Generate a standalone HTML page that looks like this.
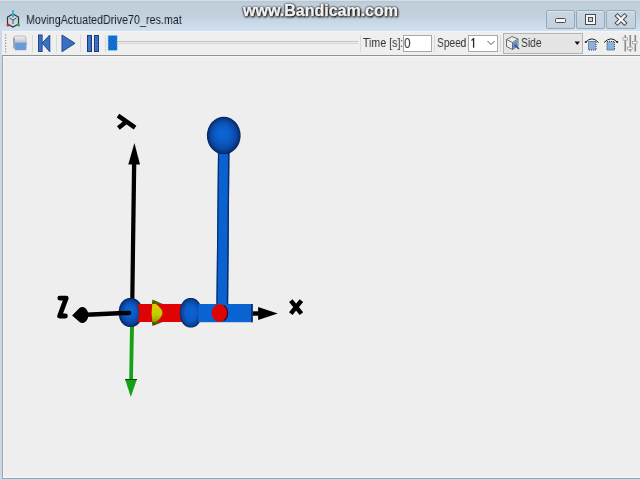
<!DOCTYPE html>
<html><head><meta charset="utf-8">
<style>
*{margin:0;padding:0;box-sizing:border-box}
html,body{width:640px;height:480px;overflow:hidden;background:#c9d9ea;font-family:"Liberation Sans",sans-serif}
.abs{position:absolute}
#title{left:0;top:0;width:640px;height:31px;background:linear-gradient(#bac8d3 0px,#bac8d3 2px,#bfcedb 3px,#c2d1de 52%,#cad9e8 75%,#d2e0f0 100%);}
#titletop{left:0;top:0;width:640px;height:1px;background:#d3dfe9}
#ttext{left:26px;top:12px;font-size:13px;color:#1e1e28;will-change:transform;white-space:nowrap;transform-origin:0 0;transform:scaleX(0.826)}
#wm{left:243px;top:2px;font-size:16px;font-weight:bold;color:#f2f2f2;white-space:nowrap;-webkit-text-stroke:0.4px #f2f2f2;text-shadow:0 0 1px #000,0 0 1px #000,0 0 2px #111,1px 1px 2px #111,0 1px 3px #333;transform:translateZ(0)}
.wbtn{top:10px;width:29px;height:19px;border:1px solid #97a8b9;background:linear-gradient(#c8d6e3,#c3d1de);border-radius:2px;box-shadow:inset 0 1px 0 #d8e4ee}
#toolbar{left:2px;top:31px;width:638px;height:24px;background:#efefef;border-top:1px solid #eef6f8}
#view{left:2px;top:55px;width:638px;height:424px;background:#eeeeee;border-left:1px solid #a4a4a4;border-top:1px solid #8f9597;border-bottom:1px solid #98a2ac;box-shadow:inset 0 1px 0 #f8f8f8}
.sep{top:35px;width:1px;height:17px;background:#d9d9d9}
.tbtxt{font-size:13px;color:#333;white-space:nowrap;transform-origin:0 0;will-change:transform}
</style></head>
<body>
<div id="title" class="abs"></div>
<div id="titletop" class="abs"></div>
<!-- app icon -->
<svg class="abs" style="left:5px;top:8px" width="16" height="22" viewBox="0 0 16 22">
  <polygon points="8,6 13.5,9 13.5,16 8,19 2.5,16 2.5,9" fill="none" stroke="#333" stroke-width="1.2"/>
  <path d="M8,12 L8,16 M8,12 L4.5,10 M8,12 L11.5,10" stroke="#555" stroke-width="1"/>
  <rect x="7" y="2.2" width="2" height="7" fill="#2ab4d8" opacity="0.9"/>
  <circle cx="3" cy="17" r="1.5" fill="#e02020"/>
  <circle cx="13.5" cy="17" r="1.5" fill="#30b030"/>
</svg>
<div id="ttext" class="abs">MovingActuatedDrive70_res.mat</div>
<div id="wm" class="abs">www.Bandicam.com</div>
<div class="abs wbtn" style="left:546px"></div>
<div class="abs wbtn" style="left:576px"></div>
<div class="abs wbtn" style="left:606px;width:30px"></div>
<svg class="abs" style="left:546px;top:10px" width="92" height="20" viewBox="0 0 92 20">
  <rect x="9.5" y="8.5" width="10" height="4" rx="1" fill="#f6f6f6" stroke="#4a4a4a" stroke-width="1"/>
  <rect x="39.5" y="4.5" width="10" height="10" fill="none" stroke="#4a4a4a" stroke-width="1"/>
  <rect x="41" y="6" width="7" height="7" fill="none" stroke="#f6f6f6" stroke-width="2"/>
  <rect x="42.5" y="7.5" width="4" height="4" fill="#c3d2e0" stroke="#4a4a4a" stroke-width="1"/>
  <path d="M71.5,6 L78.5,13 M78.5,6 L71.5,13" stroke="#4a4a4a" stroke-width="4.4" stroke-linecap="square"/>
  <path d="M71.5,6 L78.5,13 M78.5,6 L71.5,13" stroke="#f4f4f4" stroke-width="2.4" stroke-linecap="square"/>
</svg>

<div id="toolbar" class="abs"></div>
<!-- grip -->
<svg class="abs" style="left:4px;top:33px" width="3" height="21" viewBox="0 0 3 21"><g fill="#8c8c8c"><rect x="1" y="1.4" width="1.2" height="1.2"/><rect x="1" y="4.2" width="1.2" height="1.2"/><rect x="1" y="7.0" width="1.2" height="1.2"/><rect x="1" y="9.8" width="1.2" height="1.2"/><rect x="1" y="12.6" width="1.2" height="1.2"/><rect x="1" y="15.4" width="1.2" height="1.2"/><rect x="1" y="18.2" width="1.2" height="1.2"/></g></svg>
<!-- folder -->
<svg class="abs" style="left:12px;top:35px" width="17" height="17" viewBox="0 0 17 17">
  <defs><linearGradient id="fg" x1="0" y1="0" x2="0" y2="1"><stop offset="0" stop-color="#f0f0f0"/><stop offset="1" stop-color="#c4c4c4"/></linearGradient></defs>
  <path d="M1.5,3 Q1.5,1 3.5,1 L12,1 Q14,1 14,3 L14,7.5 L1.5,7.5 Z" fill="url(#fg)" stroke="#b0b0b0" stroke-width="0.8"/>
  <rect x="1.2" y="3" width="1.6" height="10.5" fill="#9a9a9a"/>
  <polygon points="2.5,7 14.8,7 14.2,15.3 3,15.3" fill="#6c9ad6"/>
  <path d="M2.5,7.4 L14.8,7.4" stroke="#a6c4ea" stroke-width="0.8"/>
</svg>
<div class="abs sep" style="left:32px"></div>
<!-- skip back -->
<svg class="abs" style="left:37px;top:34px" width="15" height="19" viewBox="0 0 15 19">
  <rect x="1.5" y="1" width="3.6" height="16.5" fill="#3a70c4" stroke="#1d4a8e" stroke-width="1"/>
  <polygon points="5.1,9 12.8,1 12.8,17.8" fill="#3a70c4" stroke="#1d4a8e" stroke-width="1"/>
</svg>
<div class="abs sep" style="left:56px"></div>
<!-- play -->
<svg class="abs" style="left:61px;top:34px" width="16" height="19" viewBox="0 0 16 19">
  <polygon points="1,1 14,9.3 1,17.7" fill="#3a70c4" stroke="#1d4a8e" stroke-width="1"/>
</svg>
<div class="abs sep" style="left:80px"></div>
<!-- pause -->
<div class="abs" style="left:87px;top:35px;width:5px;height:17px;background:#3a76d0;border:1px solid #1a3a78"></div>
<div class="abs" style="left:94px;top:35px;width:5px;height:17px;background:#3a76d0;border:1px solid #1a3a78"></div>
<div class="abs" style="left:89.5px;top:37px;width:1px;height:13px;background:repeating-linear-gradient(#1a3a78 0 1px,transparent 1px 3px);opacity:0.55"></div>
<div class="abs" style="left:96px;top:37px;width:1px;height:13px;background:repeating-linear-gradient(#1a3a78 0 1px,transparent 1px 3px);opacity:0.55"></div>
<div class="abs sep" style="left:105px"></div>
<!-- slider -->
<div class="abs" style="left:117px;top:41px;width:241px;height:3px;background:#ebebeb;border-top:1px solid #c4c4c4;border-bottom:1px solid #d6d6d6"></div>
<svg class="abs" style="left:107px;top:35px" width="11" height="16" viewBox="0 0 11 16">
  <defs><pattern id="dots" width="2" height="2" patternUnits="userSpaceOnUse" patternTransform="rotate(30)"><rect width="2" height="2" fill="#0a5ed0"/><rect x="0" y="0" width="0.8" height="0.8" fill="#3cb4c8"/></pattern></defs>
  <rect x="1" y="0.3" width="9.2" height="15.2" fill="url(#dots)"/>
  <rect x="1" y="0.3" width="9.2" height="15.2" fill="none" stroke="#9ad8f0" stroke-width="0.6"/>
</svg>
<div class="abs sep" style="left:360px"></div>
<div class="abs tbtxt" style="left:363px;top:35px;transform:scaleX(0.815)">Time [s]:</div>
<div class="abs" style="left:403px;top:35px;width:29px;height:17px;background:#fff;border:1px solid #a8a8a8"></div>
<div class="abs tbtxt" style="left:404px;top:35px;font-size:14px;transform:scaleX(0.85)">0</div>
<div class="abs sep" style="left:434px"></div>
<div class="abs tbtxt" style="left:437px;top:35px;transform:scaleX(0.78)">Speed</div>
<div class="abs" style="left:468px;top:35px;width:30px;height:17px;background:#fff;border:1px solid #a8a8a8"></div>
<svg class="abs" style="left:470px;top:37px" width="6" height="12" viewBox="0 0 6 12"><path d="M3.6,1 L3.6,10.8 M3.6,1.2 Q2.8,2.8 1.4,3.4" fill="none" stroke="#2a2a2a" stroke-width="1.3"/></svg>
<svg class="abs" style="left:486px;top:40px" width="10" height="6" viewBox="0 0 10 6"><path d="M1.5,1 L5,4.6 L8.5,1" fill="none" stroke="#5a5a5a" stroke-width="1"/></svg>
<div class="abs sep" style="left:500px"></div>
<!-- side combo -->
<div class="abs" style="left:503px;top:33px;width:80px;height:21px;background:#e5e5e5;border:1px solid #b4b4b4"></div>
<svg class="abs" style="left:505px;top:35px" width="16" height="16" viewBox="0 0 16 16">
  <polygon points="1.5,4.5 7,1.5 13,4 13,11 7.5,14.5 1.5,11.5" fill="#ececec" stroke="#606060" stroke-width="0.9"/>
  <path d="M1.5,4.5 L7.5,7.5 L13,4 M7.5,7.5 L7.5,14.5" fill="none" stroke="#606060" stroke-width="0.9"/>
  <polygon points="8,8 12.5,5 12.5,11 8,14" fill="#5a8fd0"/>
  <path d="M10,10 L14,14" stroke="#1d4a8e" stroke-width="1.5"/>
</svg>
<div class="abs" style="left:521px;top:35px;font-size:13px;color:#333;transform-origin:0 0;transform:scaleX(0.79);will-change:transform">Side</div>
<svg class="abs" style="left:574px;top:41px" width="7" height="5" viewBox="0 0 7 5"><polygon points="0.5,0.5 6,0.5 3.25,4" fill="#111"/></svg>
<!-- rotate icons -->
<svg class="abs" style="left:584px;top:35px" width="17" height="17" viewBox="0 0 17 17">
  <path d="M1.8,7 Q8,0.5 14.5,7.5" fill="none" stroke="#222" stroke-width="1"/>
  <circle cx="1.8" cy="7" r="1.1" fill="#222"/>
  <rect x="4.5" y="6.5" width="7.5" height="8.5" fill="#8ab0dc"/>
  <rect x="4.5" y="6.5" width="7.5" height="8.5" fill="none" stroke="#2a3040" stroke-width="0.9" stroke-dasharray="1,1"/>
</svg>
<svg class="abs" style="left:603px;top:35px" width="17" height="17" viewBox="0 0 17 17">
  <path d="M1,7.5 Q8,0.5 14.2,7" fill="none" stroke="#222" stroke-width="1"/>
  <circle cx="14.2" cy="7" r="1.1" fill="#222"/>
  <rect x="4" y="6.5" width="7.5" height="8.5" fill="#8ab0dc"/>
  <rect x="4" y="6.5" width="7.5" height="8.5" fill="none" stroke="#2a3040" stroke-width="0.9" stroke-dasharray="1,1"/>
</svg>
<!-- sliders icon -->
<svg class="abs" style="left:622px;top:34px" width="16" height="18" viewBox="0 0 16 18">
  <rect x="2.5" y="1" width="1.6" height="16.5" fill="#8a8a8a"/>
  <rect x="7.5" y="1" width="1.6" height="16.5" fill="#8a8a8a"/>
  <rect x="12.5" y="1" width="1.6" height="16.5" fill="#8a8a8a"/>
  <rect x="0.8" y="3.8" width="4.6" height="2.3" fill="#fafafa" stroke="#9a9a9a" stroke-width="0.7"/>
  <rect x="5.6" y="13.1" width="4.6" height="2.3" fill="#fafafa" stroke="#9a9a9a" stroke-width="0.7"/>
  <rect x="10.4" y="7.5" width="4.6" height="2.3" fill="#fafafa" stroke="#9a9a9a" stroke-width="0.7"/>
</svg>

<div id="view" class="abs"></div>
<div class="abs" style="left:3px;top:477px;width:637px;height:1px;background:#f8f8f8"></div><div class="abs" style="left:3px;top:56px;width:1px;height:421px;background:#f4f6f6"></div>

<!-- 3D scene -->
<svg class="abs" style="left:0;top:0" width="640" height="480" viewBox="0 0 640 480">
  <defs>
    <radialGradient id="sph" cx="0.5" cy="0.5" r="0.5" fx="0.46" fy="0.42">
      <stop offset="0" stop-color="#0e66d6"/>
      <stop offset="0.45" stop-color="#0a5cc8"/>
      <stop offset="0.78" stop-color="#0a46a0"/>
      <stop offset="1" stop-color="#06245c"/>
    </radialGradient>
    <radialGradient id="sph2" cx="0.5" cy="0.5" r="0.5">
      <stop offset="0" stop-color="#0c62d2"/>
      <stop offset="0.55" stop-color="#0a5cc8"/>
      <stop offset="0.85" stop-color="#0a46a0"/>
      <stop offset="1" stop-color="#06265c"/>
    </radialGradient>
    <linearGradient id="rod" x1="0" x2="1">
      <stop offset="0" stop-color="#082c6e"/>
      <stop offset="0.14" stop-color="#0c58c4"/>
      <stop offset="0.3" stop-color="#0a64d2"/>
      <stop offset="0.72" stop-color="#0a64d2"/>
      <stop offset="0.88" stop-color="#0c4eae"/>
      <stop offset="1" stop-color="#082a66"/>
    </linearGradient>
    <radialGradient id="redc" cx="0.4" cy="0.5" r="0.6">
      <stop offset="0" stop-color="#e00a0a"/>
      <stop offset="0.7" stop-color="#d40808"/>
      <stop offset="1" stop-color="#600a20"/>
    </radialGradient>
    <linearGradient id="olv" x1="0" y1="0" x2="0" y2="1">
      <stop offset="0" stop-color="#4e5200"/>
      <stop offset="0.5" stop-color="#7a8000"/>
      <stop offset="1" stop-color="#4a4e00"/>
    </linearGradient>
    <linearGradient id="ylw" x1="0" y1="0" x2="0" y2="1">
      <stop offset="0" stop-color="#d0d400"/>
      <stop offset="0.6" stop-color="#c4cc00"/>
      <stop offset="1" stop-color="#8c9a00"/>
    </linearGradient>
  </defs>
  <!-- Y axis label -->
  <path d="M118,115.6 L135.1,127.7 M126.5,121.5 L118.4,128.1" stroke="#000" stroke-width="4.5" stroke-linecap="butt"/>
  <!-- Y axis line -->
  <polygon points="132,163 136.3,163 134.4,300 130.2,300" fill="#000"/>
  <polygon points="134.4,143 140,164.5 128.3,164.5" fill="#000"/>
  <!-- green axis -->
  <polygon points="130,326 134,326 132.9,380 129.2,380" fill="#18a018"/>
  <polygon points="125,379 137,379 130.8,397" fill="#14a014"/>
  <path d="M125,379.5 L137,379.5" stroke="#0a400a" stroke-width="1"/>
  <!-- Z label -->
  <path d="M59.8,298.1 L66.2,298.1 L59.6,316 L65.4,316" fill="none" stroke="#000" stroke-width="4.8" stroke-linejoin="round" stroke-linecap="round"/>
  <!-- Z axis -->
  <path d="M86,314.8 L129,312.8" stroke="#000" stroke-width="4.5" stroke-linecap="round"/>
  <path d="M72.1,315.5 L79.25,308.3 A5.8,8 0 1 1 79.25,321.7 Z" fill="#000"/>
  <!-- sphere origin -->
  <path d="M142.50,312.50 L142.43,314.40 L142.22,316.11 L141.88,317.71 L141.40,319.21 L140.79,320.62 L140.06,321.91 L139.22,323.08 L138.27,324.11 L137.22,325.01 L136.07,325.75 L134.85,326.34 L133.54,326.76 L132.15,327.01 L130.60,327.10 L129.05,327.01 L127.66,326.76 L126.35,326.34 L125.13,325.75 L123.98,325.01 L122.93,324.11 L121.98,323.08 L121.14,321.91 L120.41,320.62 L119.80,319.21 L119.32,317.71 L118.98,316.11 L118.77,314.40 L118.70,312.50 L118.77,310.60 L118.98,308.89 L119.32,307.29 L119.80,305.79 L120.41,304.38 L121.14,303.09 L121.98,301.92 L122.93,300.89 L123.98,299.99 L125.13,299.25 L126.35,298.66 L127.66,298.24 L129.05,297.99 L130.60,297.90 L132.15,297.99 L133.54,298.24 L134.85,298.66 L136.07,299.25 L137.22,299.99 L138.27,300.89 L139.22,301.92 L140.06,303.09 L140.79,304.38 L141.40,305.79 L141.88,307.29 L142.22,308.89 L142.43,310.60 Z" fill="url(#sph)"/>
  <ellipse cx="130.6" cy="312.5" rx="8.5" ry="11" fill="none" stroke="#0b46a0" stroke-width="1.2" opacity="0.5"/>
  <path d="M119,313.2 L129.2,313" stroke="#000" stroke-width="4.3" stroke-linecap="round"/>
  <!-- yellow cone silhouette -->
  <path d="M152.5,299.4 L164,304.5 L164,321.5 L152.5,326 Q149.5,312.7 152.5,299.4 Z" fill="url(#olv)"/>
  <!-- red bar -->
  <path d="M137.6,304 L185.6,304 L185.6,322 L137.6,322 Q140.5,313 137.6,304 Z" fill="#de0404"/>
  <path d="M137.8,304.5 Q140.3,313 137.8,321.5" fill="none" stroke="#802030" stroke-width="1.2"/>
  <polygon points="151.7,304 164,304.5 164,321.5 151.7,322" fill="#7a7200" opacity="0"/>
  <path d="M152.3,304 L156,304 Q162.5,309 162.5,313 Q162,317.5 156,322 L152.3,322 Q150.8,313 152.3,304 Z" fill="url(#ylw)"/>
  
  <!-- sphere 2 -->
  <path d="M201.80,312.80 L201.74,314.73 L201.54,316.46 L201.22,318.08 L200.78,319.61 L200.22,321.03 L199.55,322.34 L198.77,323.52 L197.89,324.57 L196.92,325.48 L195.86,326.23 L194.73,326.83 L193.52,327.25 L192.23,327.51 L190.80,327.60 L189.37,327.51 L188.08,327.25 L186.87,326.83 L185.74,326.23 L184.68,325.48 L183.71,324.57 L182.83,323.52 L182.05,322.34 L181.38,321.03 L180.82,319.61 L180.38,318.08 L180.06,316.46 L179.86,314.73 L179.80,312.80 L179.86,310.87 L180.06,309.14 L180.38,307.52 L180.82,305.99 L181.38,304.57 L182.05,303.26 L182.83,302.08 L183.71,301.03 L184.68,300.12 L185.74,299.37 L186.87,298.77 L188.08,298.35 L189.37,298.09 L190.80,298.00 L192.23,298.09 L193.52,298.35 L194.73,298.77 L195.86,299.37 L196.92,300.12 L197.89,301.03 L198.77,302.08 L199.55,303.26 L200.22,304.57 L200.78,305.99 L201.22,307.52 L201.54,309.14 L201.74,310.87 Z" fill="url(#sph2)"/>
  <ellipse cx="190.8" cy="312.8" rx="8" ry="11" fill="none" stroke="#0b46a0" stroke-width="1.2" opacity="0.5"/>
  <!-- blue bar -->
  <rect x="198.4" y="304" width="54.3" height="18.2" fill="#0a64d2"/>
  <path d="M251.9,304 L251.9,322.2" stroke="#0a2a66" stroke-width="1.6"/>
  <!-- rod -->
  <polygon points="218,150 229.4,150 228.1,304.5 216.4,304.5" fill="#0a62d0"/>
  <path d="M218.6,150 L217,304.3" stroke="#0a2c6c" stroke-width="1.2"/>
  <path d="M228.8,150 L227.5,304.3" stroke="#0a2a66" stroke-width="1.4"/>
  <!-- red circle -->
  <ellipse cx="219.6" cy="313" rx="8" ry="9" fill="#de0404"/>
  <path d="M223.6,305.2 A8,9 0 0 1 223.6,320.8" fill="none" stroke="#3a0a20" stroke-width="1.3"/>
  <!-- top sphere -->
  <ellipse cx="223.75" cy="135.6" rx="16.9" ry="18.75" fill="url(#sph)"/>
  <!-- X axis -->
  <rect x="252.7" y="311.3" width="6" height="4.4" fill="#000"/>
  <polygon points="258.1,307 277.8,313.5 258.1,320" fill="#000"/>
  <!-- x label -->
  <path d="M290.8,300.6 L301.4,313.6 M301.4,300.6 L290.8,313.6" stroke="#000" stroke-width="4.5" stroke-linecap="butt"/>
</svg>
</body></html>
